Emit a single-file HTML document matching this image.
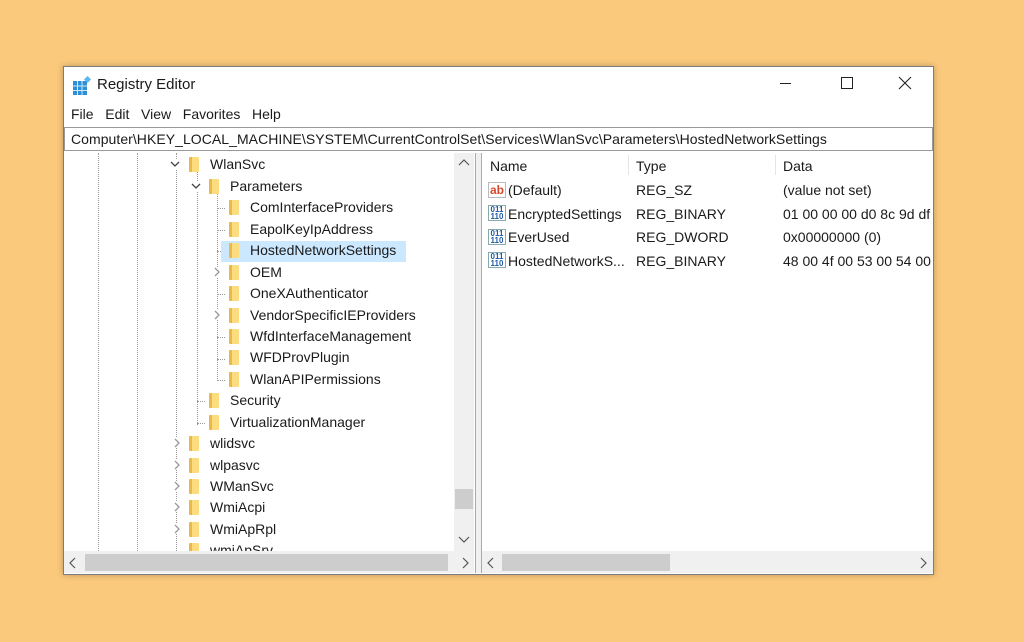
<!DOCTYPE html>
<html><head><meta charset="utf-8"><style>
body{margin:0;width:1024px;height:642px;background:#fac97c;position:relative;overflow:hidden;font-family:"Liberation Sans",sans-serif;font-size:14px;color:#1a1a1a}
.a{position:absolute}
.win{left:63px;top:66px;width:869px;height:507px;background:#fff;border:1px solid #7d7d7d;box-shadow:0 0 6px rgba(0,0,0,.25)}
.row{position:absolute;height:21px;line-height:21px;white-space:nowrap;left:0;width:390px}
.f{position:absolute;width:10px;height:15px;background:linear-gradient(90deg,#e9b94a 0 3px,#fddc80 3px);top:3px;border-radius:1px}
.ch{position:absolute;top:5px;width:10px;height:10px}
.dv{position:absolute;border-left:1px dotted #999}
.dh{position:absolute;border-top:1px dotted #999;width:8px}
.ic{position:absolute;width:18px;height:16px;border:1px solid #8aa;background:#fff;font-size:8px;line-height:7px;color:#1e5aa8;font-weight:bold;text-align:center}
</style></head><body>
<div class="a win">
 <svg class="a" style="left:8px;top:9px" width="20" height="20"><rect x="1" y="5" width="14" height="14" fill="#2d8fd6"/><path d="M1 10h14M1 14.5h14M5.5 5v14M10 5v14" stroke="#cfe8fa" stroke-width="1"/><rect x="13" y="1" width="5" height="5" fill="#5bb7f0" transform="rotate(45 15.5 3.5)"/></svg>
 <div class="a" style="left:33px;top:9px;font-size:15px">Registry Editor</div>
 <div class="a" style="left:716px;top:16px;width:11px;border-top:1px solid #222"></div>
 <div class="a" style="left:777px;top:10px;width:10px;height:10px;border:1px solid #222"></div>
 <svg class="a" style="left:834px;top:9px" width="14" height="14"><path d="M1 1L13 13M13 1L1 13" stroke="#222" stroke-width="1.1"/></svg>
 <div class="a" style="left:7px;top:39px">File&nbsp;&nbsp;&nbsp;Edit&nbsp;&nbsp;&nbsp;View&nbsp;&nbsp;&nbsp;Favorites&nbsp;&nbsp;&nbsp;Help</div>
 <div class="a" style="left:0;top:60px;border:1px solid #999;line-height:22px;padding-left:6px;box-sizing:border-box;width:869px;height:24px;letter-spacing:0.05px;white-space:nowrap">Computer\HKEY_LOCAL_MACHINE\SYSTEM\CurrentControlSet\Services\WlanSvc\Parameters\HostedNetworkSettings</div>
 <div class="a" style="left:0;top:86px;width:411px;height:420px;border-right:1px solid #aaa;overflow:hidden">
  <div class="dv" style="left:34px;top:0;height:400px"></div>
  <div class="dv" style="left:73px;top:0;height:400px"></div>
  <div class="dv" style="left:112px;top:0;height:400px"></div>
  <div class="dv" style="left:133px;top:12px;height:260px"></div>
  <div class="dh" style="left:133px;top:248px"></div>
  <div class="dh" style="left:133px;top:270px"></div>
  <div class="dv" style="left:153px;top:33px;height:195px"></div>
  <div class="dh" style="left:153px;top:55px"></div><div class="dh" style="left:153px;top:77px"></div><div class="dh" style="left:153px;top:98px"></div><div class="dh" style="left:153px;top:141px"></div><div class="dh" style="left:153px;top:184px"></div><div class="dh" style="left:153px;top:206px"></div><div class="dh" style="left:153px;top:227px"></div>
  <div class="a" style="left:157px;top:88px;width:185px;height:21px;background:#cce8ff"></div>
  <div class="row" style="top:1px"><svg class="ch" style="left:106px;background:#fff"><path d="M1 3l4 4 4-4" fill="none" stroke="#444" stroke-width="1.3"/></svg><span class="f" style="left:125px"></span><span class="a" style="left:146px">WlanSvc</span></div>
  <div class="row" style="top:23px"><svg class="ch" style="left:127px;background:#fff"><path d="M1 3l4 4 4-4" fill="none" stroke="#444" stroke-width="1.3"/></svg><span class="f" style="left:145px"></span><span class="a" style="left:166px">Parameters</span></div>
  <div class="row" style="top:44px"><span class="f" style="left:165px"></span><span class="a" style="left:186px">ComInterfaceProviders</span></div>
  <div class="row" style="top:66px"><span class="f" style="left:165px"></span><span class="a" style="left:186px">EapolKeyIpAddress</span></div>
  <div class="row" style="top:87px"><span class="f" style="left:165px"></span><span class="a" style="left:186px">HostedNetworkSettings</span></div>
  <div class="row" style="top:109px"><svg class="ch" style="left:148px;background:#fff"><path d="M3 1l4 4-4 4" fill="none" stroke="#999" stroke-width="1.3"/></svg><span class="f" style="left:165px"></span><span class="a" style="left:186px">OEM</span></div>
  <div class="row" style="top:130px"><span class="f" style="left:165px"></span><span class="a" style="left:186px">OneXAuthenticator</span></div>
  <div class="row" style="top:152px"><svg class="ch" style="left:148px;background:#fff"><path d="M3 1l4 4-4 4" fill="none" stroke="#999" stroke-width="1.3"/></svg><span class="f" style="left:165px"></span><span class="a" style="left:186px">VendorSpecificIEProviders</span></div>
  <div class="row" style="top:173px"><span class="f" style="left:165px"></span><span class="a" style="left:186px">WfdInterfaceManagement</span></div>
  <div class="row" style="top:194px"><span class="f" style="left:165px"></span><span class="a" style="left:186px">WFDProvPlugin</span></div>
  <div class="row" style="top:216px"><span class="f" style="left:165px"></span><span class="a" style="left:186px">WlanAPIPermissions</span></div>
  <div class="row" style="top:237px"><span class="f" style="left:145px"></span><span class="a" style="left:166px">Security</span></div>
  <div class="row" style="top:259px"><span class="f" style="left:145px"></span><span class="a" style="left:166px">VirtualizationManager</span></div>
  <div class="row" style="top:280px"><svg class="ch" style="left:108px;background:#fff"><path d="M3 1l4 4-4 4" fill="none" stroke="#999" stroke-width="1.3"/></svg><span class="f" style="left:125px"></span><span class="a" style="left:146px">wlidsvc</span></div>
  <div class="row" style="top:302px"><svg class="ch" style="left:108px;background:#fff"><path d="M3 1l4 4-4 4" fill="none" stroke="#999" stroke-width="1.3"/></svg><span class="f" style="left:125px"></span><span class="a" style="left:146px">wlpasvc</span></div>
  <div class="row" style="top:323px"><svg class="ch" style="left:108px;background:#fff"><path d="M3 1l4 4-4 4" fill="none" stroke="#999" stroke-width="1.3"/></svg><span class="f" style="left:125px"></span><span class="a" style="left:146px">WManSvc</span></div>
  <div class="row" style="top:344px"><svg class="ch" style="left:108px;background:#fff"><path d="M3 1l4 4-4 4" fill="none" stroke="#999" stroke-width="1.3"/></svg><span class="f" style="left:125px"></span><span class="a" style="left:146px">WmiAcpi</span></div>
  <div class="row" style="top:366px"><svg class="ch" style="left:108px;background:#fff"><path d="M3 1l4 4-4 4" fill="none" stroke="#999" stroke-width="1.3"/></svg><span class="f" style="left:125px"></span><span class="a" style="left:146px">WmiApRpl</span></div>
  <div class="row" style="top:387px"><span class="f" style="left:125px"></span><span class="a" style="left:146px">wmiApSrv</span></div>
  <div class="a" style="left:390px;top:0;width:20px;height:398px;background:#f0f0f0"></div>
  <svg class="a" style="left:394px;top:6px" width="12" height="8"><path d="M1 6l5-5 5 5" fill="none" stroke="#555" stroke-width="1.2"/></svg>
  <svg class="a" style="left:394px;top:383px" width="12" height="8"><path d="M1 1l5 5 5-5" fill="none" stroke="#555" stroke-width="1.2"/></svg>
  <div class="a" style="left:391px;top:336px;width:18px;height:20px;background:#cdcdcd"></div>
  <div class="a" style="left:0;top:398px;width:410px;height:22px;background:#f0f0f0"></div>
  <svg class="a" style="left:5px;top:404px" width="8" height="12"><path d="M6 1L1 6l5 5" fill="none" stroke="#555" stroke-width="1.2"/></svg>
  <svg class="a" style="left:398px;top:404px" width="8" height="12"><path d="M1 1l5 5-5 5" fill="none" stroke="#555" stroke-width="1.2"/></svg>
  <div class="a" style="left:21px;top:401px;width:363px;height:17px;background:#cdcdcd"></div>
 </div>
 <div class="a" style="left:412px;top:86px;width:5px;height:420px;background:#f0f0f0;border-right:1px solid #aaa"></div>
 <div class="a" style="left:418px;top:86px;width:451px;height:420px;overflow:hidden">
  <div class="a" style="left:146px;top:2px;height:20px;border-left:1px solid #e5e5e5"></div>
  <div class="a" style="left:293px;top:2px;height:20px;border-left:1px solid #e5e5e5"></div>
  <div class="a" style="left:8px;top:5px">Name</div>
  <div class="a" style="left:154px;top:5px">Type</div>
  <div class="a" style="left:301px;top:5px">Data</div>
  <div class="a" style="left:6px;top:29px;width:18px;height:16px;border:1px solid #bbb;color:#d8492c;font-weight:bold;font-size:12px;line-height:14px;text-align:center;box-sizing:border-box">ab</div>
  <div class="ic" style="left:6px;top:52px;box-sizing:border-box">011<br>110</div>
  <div class="ic" style="left:6px;top:76px;box-sizing:border-box">011<br>110</div>
  <div class="ic" style="left:6px;top:99px;box-sizing:border-box">011<br>110</div>
  <div class="a" style="left:26px;top:29px">(Default)</div><div class="a" style="left:154px;top:29px">REG_SZ</div><div class="a" style="left:301px;top:29px">(value not set)</div>
  <div class="a" style="left:26px;top:53px">EncryptedSettings</div><div class="a" style="left:154px;top:53px">REG_BINARY</div><div class="a" style="left:301px;top:53px;white-space:nowrap">01 00 00 00 d0 8c 9d df</div>
  <div class="a" style="left:26px;top:76px">EverUsed</div><div class="a" style="left:154px;top:76px">REG_DWORD</div><div class="a" style="left:301px;top:76px">0x00000000 (0)</div>
  <div class="a" style="left:26px;top:100px">HostedNetworkS...</div><div class="a" style="left:154px;top:100px">REG_BINARY</div><div class="a" style="left:301px;top:100px;white-space:nowrap">48 00 4f 00 53 00 54 00</div>
  <div class="a" style="left:0;top:398px;width:451px;height:22px;background:#f0f0f0"></div>
  <svg class="a" style="left:5px;top:404px" width="8" height="12"><path d="M6 1L1 6l5 5" fill="none" stroke="#555" stroke-width="1.2"/></svg>
  <svg class="a" style="left:438px;top:404px" width="8" height="12"><path d="M1 1l5 5-5 5" fill="none" stroke="#555" stroke-width="1.2"/></svg>
  <div class="a" style="left:20px;top:401px;width:168px;height:17px;background:#cdcdcd"></div>
 </div>
</div>
</body></html>
